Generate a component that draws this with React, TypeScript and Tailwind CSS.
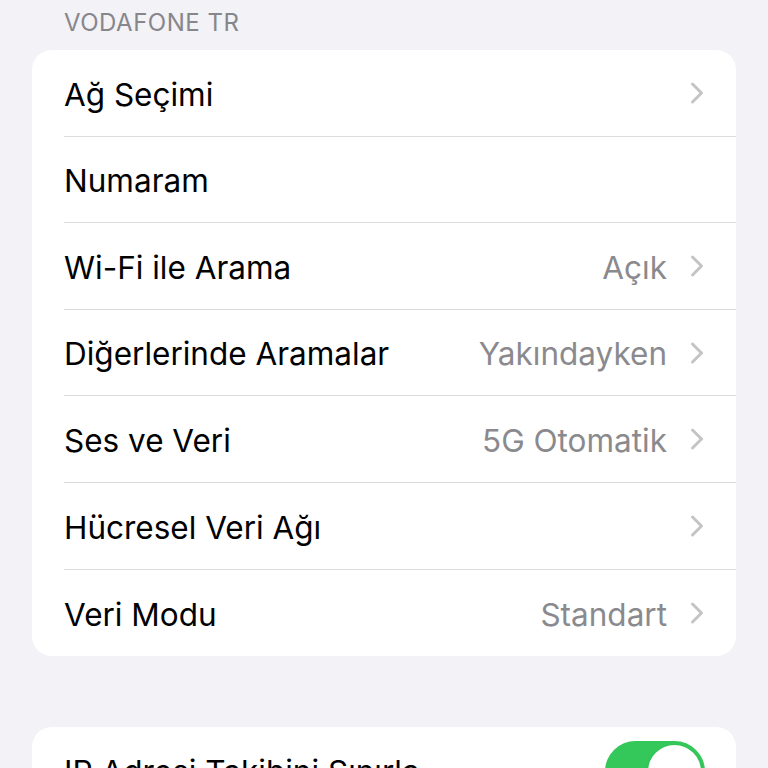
type Row = { label: string; value?: string; chevron?: boolean };

const rows: Row[] = [
  { label: 'Ağ Seçimi', chevron: true },
  { label: 'Numaram' },
  { label: 'Wi-Fi ile Arama', value: 'Açık', chevron: true },
  { label: 'Diğerlerinde Aramalar', value: 'Yakındayken', chevron: true },
  { label: 'Ses ve Veri', value: '5G Otomatik', chevron: true },
  { label: 'Hücresel Veri Ağı', chevron: true },
  { label: 'Veri Modu', value: 'Standart', chevron: true },
];

function Chevron() {
  return (
    <svg width="14" height="24" viewBox="0 0 14 24" className="ml-[23px] -mt-[3px]">
      <path
        d="M2.5 3 L11.5 12 L2.5 21"
        fill="none"
        stroke="#c4c4c7"
        strokeWidth="3"
        strokeLinecap="round"
        strokeLinejoin="round"
      />
    </svg>
  );
}

function SettingsRow({ row, last }: { row: Row; last: boolean }) {
  return (
    <div className="pl-8">
      <div
        className={`h-[86.6px] flex items-center pr-8 pt-[3px] ${
          last ? '' : 'border-b border-[#dcdce0]'
        }`}
      >
        <span className="text-[31.5px] text-black">{row.label}</span>
        <div className="ml-auto flex items-center">
          {row.value && <span className="text-[31.5px] text-[#8a8a8e]">{row.value}</span>}
          {row.chevron && <Chevron />}
        </div>
      </div>
    </div>
  );
}

export default function App() {
  return (
    <div
      className="w-[768px] h-[768px] overflow-hidden bg-[#f2f2f7]"
      style={{ fontFamily: 'Inter, "Noto Sans", sans-serif' }}
    >
      <div className="px-8">
        <div className="pl-8 pt-[5px] h-[50px] text-[24px] text-[#86868b] tracking-[0.5px]">
          VODAFONE TR
        </div>

        <div className="bg-white rounded-[20px] overflow-hidden">
          {rows.map((r, i) => (
            <SettingsRow key={r.label} row={r} last={i === rows.length - 1} />
          ))}
        </div>

        <div className="h-[71px]" />

        <div className="bg-white rounded-[20px] overflow-hidden">
          <div className="pl-8 pr-[31px] h-[88px] flex items-center">
            <span className="text-[31.5px] text-black">IP Adresi Takibini Sınırla</span>
            <div className="ml-auto w-[100px] h-[61px] rounded-full bg-[#34c759] flex items-center justify-end p-[4px]">
              <div className="w-[53px] h-[53px] rounded-full bg-white shadow" />
            </div>
          </div>
        </div>
      </div>
    </div>
  );
}
